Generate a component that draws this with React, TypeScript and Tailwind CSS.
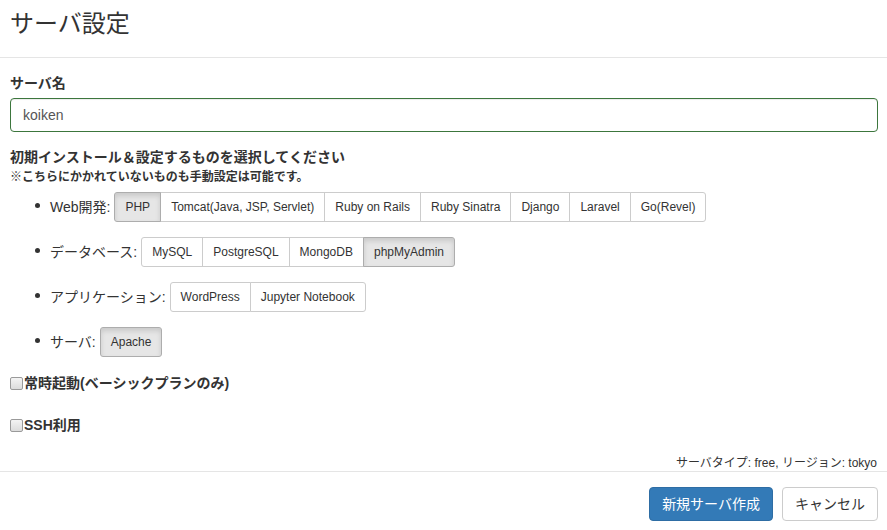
import React from "react";

type Opt = { name: string; active?: boolean };

const rows: { label: string; opts: Opt[] }[] = [
  {
    label: "Web開発:",
    opts: [
      { name: "PHP", active: true },
      { name: "Tomcat(Java, JSP, Servlet)" },
      { name: "Ruby on Rails" },
      { name: "Ruby Sinatra" },
      { name: "Django" },
      { name: "Laravel" },
      { name: "Go(Revel)" },
    ],
  },
  {
    label: "データベース:",
    opts: [
      { name: "MySQL" },
      { name: "PostgreSQL" },
      { name: "MongoDB" },
      { name: "phpMyAdmin", active: true },
    ],
  },
  {
    label: "アプリケーション:",
    opts: [{ name: "WordPress" }, { name: "Jupyter Notebook" }],
  },
  {
    label: "サーバ:",
    opts: [{ name: "Apache", active: true }],
  },
];

function Group({ opts }: { opts: Opt[] }) {
  return (
    <div className="flex">
      {opts.map((o, i) => (
        <div
          key={o.name}
          className={
            "h-[30px] px-[10px] flex items-center text-[12px] leading-[18px] border text-[#333] " +
            (i > 0 ? "-ml-px " : "") +
            (i === 0 ? "rounded-l-[3px] " : "") +
            (i === opts.length - 1 ? "rounded-r-[3px] " : "") +
            (o.active
              ? "bg-[#e6e6e6] border-[#adadad] shadow-[inset_0_3px_5px_rgba(0,0,0,0.125)] relative z-10"
              : "bg-white border-[#ccc]")
          }
        >
          {o.name}
        </div>
      ))}
    </div>
  );
}

function Check({ label, className }: { label: string; className: string }) {
  return (
    <div className={"flex items-center h-[20px] " + className}>
      <span className="w-[13px] h-[13px] rounded-[2px] border border-[#9a9a9a] bg-gradient-to-b from-[#f4f4f4] to-[#dcdcdc]" />
      <span className="ml-[1px] text-[14px] font-bold leading-[20px]">{label}</span>
    </div>
  );
}

export default function App() {
  return (
    <div className="w-[887px] h-[530px] bg-white text-[#333] flex flex-col overflow-hidden font-['Liberation_Sans','Noto_Sans_CJK_JP',sans-serif]">
      <div className="h-[58px] shrink-0 border-b border-[#e5e5e5] pl-[10px] pt-[11px]">
        <h4 className="text-[24px] leading-[26px] font-normal">サーバ設定</h4>
      </div>
      <div className="flex-1 flex flex-col pl-[10px] pr-[9px] pt-[15px]">
        <label className="block text-[14px] font-bold leading-[20px] mb-[5px]">サーバ名</label>
        <div className="h-[34px] border border-[#3c763d] rounded-[4px] px-[12px] flex items-center text-[14px] text-[#555] shadow-[inset_0_1px_1px_rgba(0,0,0,0.075)]">
          koiken
        </div>
        <div className="mt-[15px] text-[14px] font-bold leading-[20px]">
          初期インストール＆設定するものを選択してください
        </div>
        <div className="text-[12px] font-bold leading-[20px]">
          ※こちらにかかれていないものも手動設定は可能です。
        </div>
        <div className="mt-[5px] flex flex-col gap-[15px]">
          {rows.map((r) => (
            <div key={r.label} className="flex items-center">
              <span className="ml-[25px] mr-[10px] mb-[3px] w-[5px] h-[5px] rounded-full bg-[#333]" />
              <span className="text-[14px] leading-[20px] mr-[4px]">{r.label}</span>
              <Group opts={r.opts} />
            </div>
          ))}
        </div>
        <Check label="常時起動(ベーシックプランのみ)" className="mt-[16px]" />
        <Check label="SSH利用" className="mt-[22px]" />
        <div className="mt-auto text-right text-[12px] leading-[16px] pr-[1px]">
          サーバタイプ: free, リージョン: tokyo
        </div>
      </div>
      <div className="h-[59px] shrink-0 border-t border-[#e5e5e5] pt-[15px] pr-[9px] flex justify-end gap-[9px]">
        <button className="h-[34px] px-[12px] rounded-[4px] border border-[#2e6da4] bg-[#337ab7] text-white text-[14px]">
          新規サーバ作成
        </button>
        <button className="h-[34px] px-[12px] rounded-[4px] border border-[#ccc] bg-white text-[#333] text-[14px]">
          キャンセル
        </button>
      </div>
    </div>
  );
}
